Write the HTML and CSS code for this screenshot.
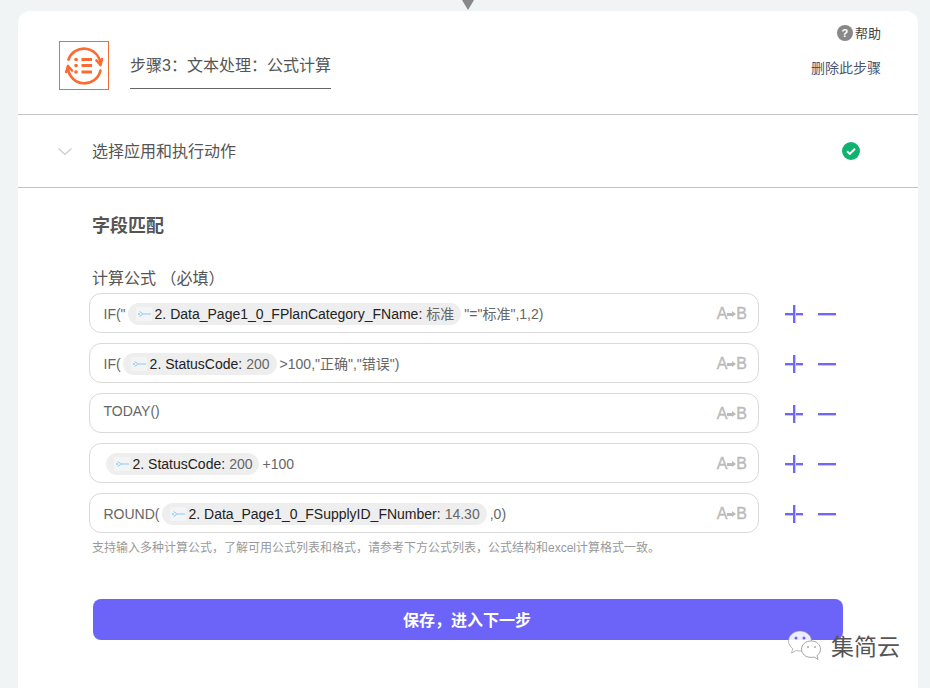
FILE: index.html
```html
<!DOCTYPE html>
<html lang="zh-CN">
<head>
<meta charset="utf-8">
<title>步骤3</title>
<link rel="stylesheet" href="styles.css">
</head>
<body>
<div class="arrow"></div>
<main class="card">
  <header class="head">
    <div class="logo">
      <svg width="38" height="38" viewBox="0 0 38 38" fill="none" stroke="#fb6a30" stroke-width="2.600" stroke-linecap="round" stroke-linejoin="round">
        <path d="M3.500 12.500A16.500 16.500 0 0 1 35.300 15.500"/>
        <path d="M31.500 13.500L35.500 18L37 12"/>
        <path d="M35.500 23.500A16.500 16.500 0 0 1 3 21.500"/>
        <path d="M7 23.500L3 19L1.200 25"/>
        <path d="M16.500 12.500h10.500M16.500 18.500h10.500M16.500 25h10.500" stroke-width="2.800" stroke-linecap="butt"/>
        <path d="M11 12.500h.1M11 18.500h.1M11 25h.1" stroke-width="3.600"/>
      </svg>
    </div>
    <div class="title">步骤3：文本处理：公式计算</div>
    <div class="head-right">
      <div class="help"><span class="q">?</span><span class="help-text">帮助</span></div>
      <div class="del">删除此步骤</div>
    </div>
  </header>
  <section class="action">
    <svg class="chev" width="16" height="9" viewBox="0 0 16 9" fill="none" stroke="#c3ccd6" stroke-width="1.200"><path d="M1.500 1.500L8 7.500l6.500-6"/></svg>
    <span class="action-text">选择应用和执行动作</span>
    <svg class="ok" width="18" height="18" viewBox="0 0 18 18"><circle cx="9" cy="9" r="9" fill="#0fb36f"/><path d="M5 9.300l2.800 2.600L13 6.800" fill="none" stroke="#fff" stroke-width="2"/></svg>
  </section>
  <section class="fields">
    <h2 class="sub">字段匹配</h2>
    <div class="label">计算公式 （必填）</div>
    <div class="rows">
      <div class="row">
        <div class="input"><span class="txt">IF("</span><span class="chip"><svg class="ci" width="16" height="14" viewBox="0 0 16 14"><rect width="16" height="14" fill="#f3f4f6"/><path d="M6 7h9" stroke="#8cc9f0" stroke-width="1" fill="none"/><path d="M2 7h2M4 4.500l2 2M4 9.500l2-2" stroke="#5cb8f0" stroke-width="1" fill="none"/></svg><b>2. Data_Page1_0_FPlanCategory_FName:</b> 标准</span><span class="txt">"="标准",1,2)</span><span class="ab">A<i></i>B</span></div>
        <span class="plus"></span><span class="minus"></span>
      </div>
      <div class="row">
        <div class="input"><span class="txt">IF(</span><span class="chip"><svg class="ci" width="16" height="14" viewBox="0 0 16 14"><rect width="16" height="14" fill="#f3f4f6"/><path d="M6 7h9" stroke="#8cc9f0" stroke-width="1" fill="none"/><path d="M2 7h2M4 4.500l2 2M4 9.500l2-2" stroke="#5cb8f0" stroke-width="1" fill="none"/></svg><b>2. StatusCode:</b> 200</span><span class="txt">&gt;100,"正确","错误")</span><span class="ab">A<i></i>B</span></div>
        <span class="plus"></span><span class="minus"></span>
      </div>
      <div class="row">
        <div class="input up"><span class="txt">TODAY()</span><span class="ab">A<i></i>B</span></div>
        <span class="plus"></span><span class="minus"></span>
      </div>
      <div class="row">
        <div class="input"><span class="chip"><svg class="ci" width="16" height="14" viewBox="0 0 16 14"><rect width="16" height="14" fill="#f3f4f6"/><path d="M6 7h9" stroke="#8cc9f0" stroke-width="1" fill="none"/><path d="M2 7h2M4 4.500l2 2M4 9.500l2-2" stroke="#5cb8f0" stroke-width="1" fill="none"/></svg><b>2. StatusCode:</b> 200</span><span class="txt">+100</span><span class="ab">A<i></i>B</span></div>
        <span class="plus"></span><span class="minus"></span>
      </div>
      <div class="row">
        <div class="input"><span class="txt">ROUND(</span><span class="chip"><svg class="ci" width="16" height="14" viewBox="0 0 16 14"><rect width="16" height="14" fill="#f3f4f6"/><path d="M6 7h9" stroke="#8cc9f0" stroke-width="1" fill="none"/><path d="M2 7h2M4 4.500l2 2M4 9.500l2-2" stroke="#5cb8f0" stroke-width="1" fill="none"/></svg><b>2. Data_Page1_0_FSupplyID_FNumber:</b> 14.30</span><span class="txt">,0)</span><span class="ab">A<i></i>B</span></div>
        <span class="plus"></span><span class="minus"></span>
      </div>
    </div>
    <p class="hint">支持输入多种计算公式，了解可用公式列表和格式，请参考下方公式列表，公式结构和excel计算格式一致。</p>
    <button class="save">保存，进入下一步</button>
  </section>
</main>
<div class="mark">
  <svg width="36" height="34" viewBox="0 0 36 34">
    <path d="M13 1C6.500 1 1.500 5.500 1.500 11c0 3.200 1.700 5.800 4.300 7.700L4.500 23l5-2.600c1.200.4 2.300.6 3.500.6 6.500 0 11.500-4.500 11.500-10S19.500 1 13 1z" fill="#fff" fill-opacity=".88" stroke="#8e8e8e" stroke-width=".6"/>
    <circle cx="9" cy="8" r="1.500" fill="#6c63f8"/><circle cx="17" cy="8" r="1.500" fill="#6c63f8"/>
    <path d="M24 11c-5.500 0-9.500 3.700-9.500 8.200s4 8.200 9.500 8.200c1 0 2-.1 2.900-.4l4.100 2.400-1-3.700c2.200-1.500 3.500-3.900 3.500-6.500 0-4.500-4-8.200-9-8.200z" fill="#fff" stroke="#8e8e8e" stroke-width=".8"/>
    <circle cx="21" cy="17" r="1" fill="#aaa"/><circle cx="28" cy="17" r="1" fill="#aaa"/>
  </svg>
  <span>集简云</span>
</div>
</body>
</html>
```
FILE: styles.css
```css
* { box-sizing: border-box; }
html, body { margin: 0; height: 688px; overflow: hidden; }
body {
  background: #f0f4f5;
  font-family: "Liberation Sans", "Noto Sans CJK SC", sans-serif;
  color: #555;
  padding: 11px 12px 0 18px;
  position: relative;
}
.arrow {
  position: absolute;
  left: 462px;
  top: 0;
  width: 0;
  height: 0;
  border-left: 6px solid transparent;
  border-right: 6px solid transparent;
  border-top: 10px solid #888;
}
.card {
  background: #fff;
  border-radius: 12px 12px 0 0;
  width: 900px;
  height: 677px;
}
.head {
  height: 104px;
  border-bottom: 1px solid #c4c4c6;
  padding: 30px 37px 0 41px;
  display: flex;
  align-items: flex-start;
}
.logo {
  width: 50px;
  height: 49px;
  border: 1px solid #f26a35;
  display: flex;
  align-items: center;
  justify-content: center;
}
.title {
  margin: 12px 0 0 21px;
  height: 36px;
  line-height: 24px;
  padding-top: 1px;
  font-size: 16px;
  color: #555;
  border-bottom: 1px solid #666;
  width: 201px;
  white-space: nowrap;
}
.head-right {
  margin-left: auto;
  display: flex;
  flex-direction: column;
  align-items: flex-end;
}
.help {
  display: flex;
  align-items: center;
  height: 16px;
  margin-top: -16px;
  color: #444;
  font-size: 13px;
}
.help-text { margin-top: -2px; }
.q {
  width: 16px;
  height: 16px;
  border-radius: 50%;
  background: #888;
  color: #fff;
  font-size: 11px;
  font-weight: bold;
  text-align: center;
  line-height: 16px;
  margin-right: 2px;
}
.del { margin-top: 19px; color: #4a5570; line-height: 16px; font-size: 14px; }
.action {
  height: 73px;
  border-bottom: 1px solid #c4c4c6;
  display: flex;
  align-items: center;
  padding-left: 39px;
}
.chev { margin-right: 20px; }
.action-text { font-size: 16px; color: #555; margin-top: -2px; margin-left: -1px; }
.ok { margin-left: auto; margin-right: 58px; }
.fields { padding: 0 75px 0 71px; }
.sub {
  margin: 26px 0 0 3px;
  font-size: 18px;
  line-height: 24px;
  font-weight: bold;
  color: #555;
}
.label {
  margin: 30px 0 0 3px;
  font-size: 16px;
  line-height: 22px;
  color: #555;
  white-space: nowrap;
}
.rows { display: flex; flex-direction: column; gap: 10px; margin-top: 3px; }
.row { display: flex; align-items: center; width: 754px; }
.input {
  width: 670px;
  height: 40px;
  border: 1px solid #d9d9d9;
  border-radius: 12px;
  padding: 2px 11px 0 13.500px;
  display: flex;
  align-items: center;
  font-size: 14px;
  color: #666;
  white-space: nowrap;
}
.up .txt { margin-bottom: 6px; }
.txt { line-height: 20px; }
.chip {
  background: #eeeeef;
  border-radius: 11px;
  height: 22px;
  line-height: 22px;
  padding: 0 7px 0 8px;
  margin: 0 3px 0 2px;
  color: #666;
  display: inline-flex;
  align-items: center;
}
.chip b { font-weight: normal; color: #222; margin-right: 4px; }
.ci { margin-right: 3px; flex: none; }
.ab {
  margin-left: auto;
  font-size: 16px;
  color: #bbb;
  -webkit-text-stroke: 0.4px #bbb;
  display: flex;
  align-items: center;
}
.ab i {
  width: 6px;
  height: 3px;
  background: #bbb;
  margin: 0 3px 0 0;
  position: relative;
}
.ab i::after {
  content: "";
  position: absolute;
  right: -3px;
  top: -2px;
  border-left: 4px solid #bbb;
  border-top: 3.500px solid transparent;
  border-bottom: 3.500px solid transparent;
}
.plus, .minus { position: relative; display: block; flex: none; width: 18px; height: 18px; top: 1px; }
.plus { margin-left: 26px; }
.minus { margin-left: 15px; }
.plus::before, .plus::after, .minus::before {
  content: "";
  position: absolute;
  background: #6f66fa;
}
.plus::before, .minus::before { left: 0; top: 8px; width: 18px; height: 2px; box-shadow: 0 1px 0 #c9c5fd; }
.plus::after { left: 8px; top: 0; width: 2px; height: 18px; box-shadow: 1px 0 0 #c9c5fd; }
.hint {
  margin: 7px 0 0 3px;
  font-size: 12px;
  line-height: 16px;
  color: #999;
  white-space: nowrap;
}
.save {
  display: block;
  margin: 43px 0 0 4px;
  width: 750px;
  height: 41px;
  border: 0;
  border-radius: 8px;
  background: #6c63f8;
  color: #fff;
  font-family: "Liberation Serif", "Noto Sans CJK SC", serif;
  font-size: 16px;
  font-weight: bold;
  padding: 0 2px 2px 0;
}
.mark {
  position: absolute;
  left: 787px;
  top: 630px;
  display: flex;
  align-items: center;
  color: #555;
  font-size: 23px;
  line-height: 34px;
}
.mark span { margin-left: 8px; }
```
